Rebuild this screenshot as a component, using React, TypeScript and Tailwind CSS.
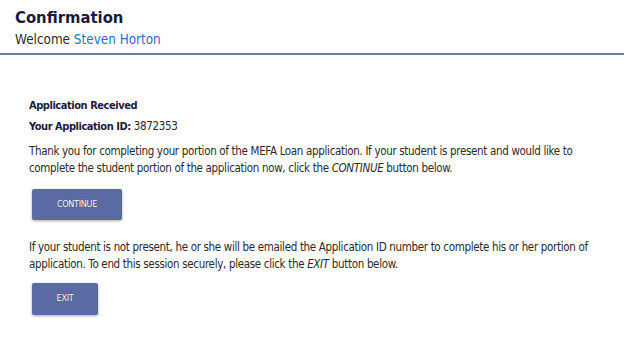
export default function App() {
  const font = { fontFamily: '"DejaVu Sans Condensed", "DejaVu Sans", Tahoma, sans-serif' };
  return (
    <div className="w-[624px] h-[351px] bg-white text-[#2a2a2a] overflow-hidden" style={font}>
      <div className="pl-[15px] pt-[7px] h-[55px] border-b-2 border-[#6e7ca9]">
        <div className="text-[16.5px] leading-[22px] font-bold text-[#1c1a3a]">Confirmation</div>
        <div className="text-[13.4px] leading-[18px] mt-[2px] text-[#2a2a2a]">
          Welcome <span className="text-[#2a6ebf]">Steven Horton</span>
        </div>
      </div>
      <div className="pl-[29px] pt-[41.5px] text-[11.5px] tracking-[-0.33px]">
        <div className="font-bold text-[#1c1a3a] leading-[17px] text-[11px] tracking-[-0.45px]">Application Received</div>
        <div className="mt-[4px] leading-[17px]">
          <span className="font-bold text-[#1c1a3a] text-[11px] tracking-[-0.45px]">Your Application ID:</span> 3872353
        </div>
        <p className="mt-[8px] leading-[17px] w-[575px]">
          Thank you for completing your portion of the MEFA Loan application. If your student is present and would like to complete the student portion of the application now, click the <i>CONTINUE</i> button below.
        </p>
        <button className="ml-[3px] mt-[12.5px] w-[90px] h-[31px] bg-[#5a6aa2] text-white text-[9px] tracking-[-0.3px] rounded-[2px] shadow-[0_1px_3px_rgba(0,0,0,0.35)] [text-shadow:0_0_1px_rgba(0,0,0,0.5)]">
          CONTINUE
        </button>
        <p className="mt-[18.5px] leading-[17px] w-[575px]">
          If your student is not present, he or she will be emailed the Application ID number to complete his or her portion of application. To end this session securely, please click the <i>EXIT</i> button below.
        </p>
        <button className="ml-[3px] mt-[10.5px] w-[66px] h-[32px] bg-[#5a6aa2] text-white text-[9px] tracking-[-0.3px] rounded-[2px] shadow-[0_1px_3px_rgba(0,0,0,0.35)] [text-shadow:0_0_1px_rgba(0,0,0,0.5)]">
          EXIT
        </button>
      </div>
    </div>
  );
}
